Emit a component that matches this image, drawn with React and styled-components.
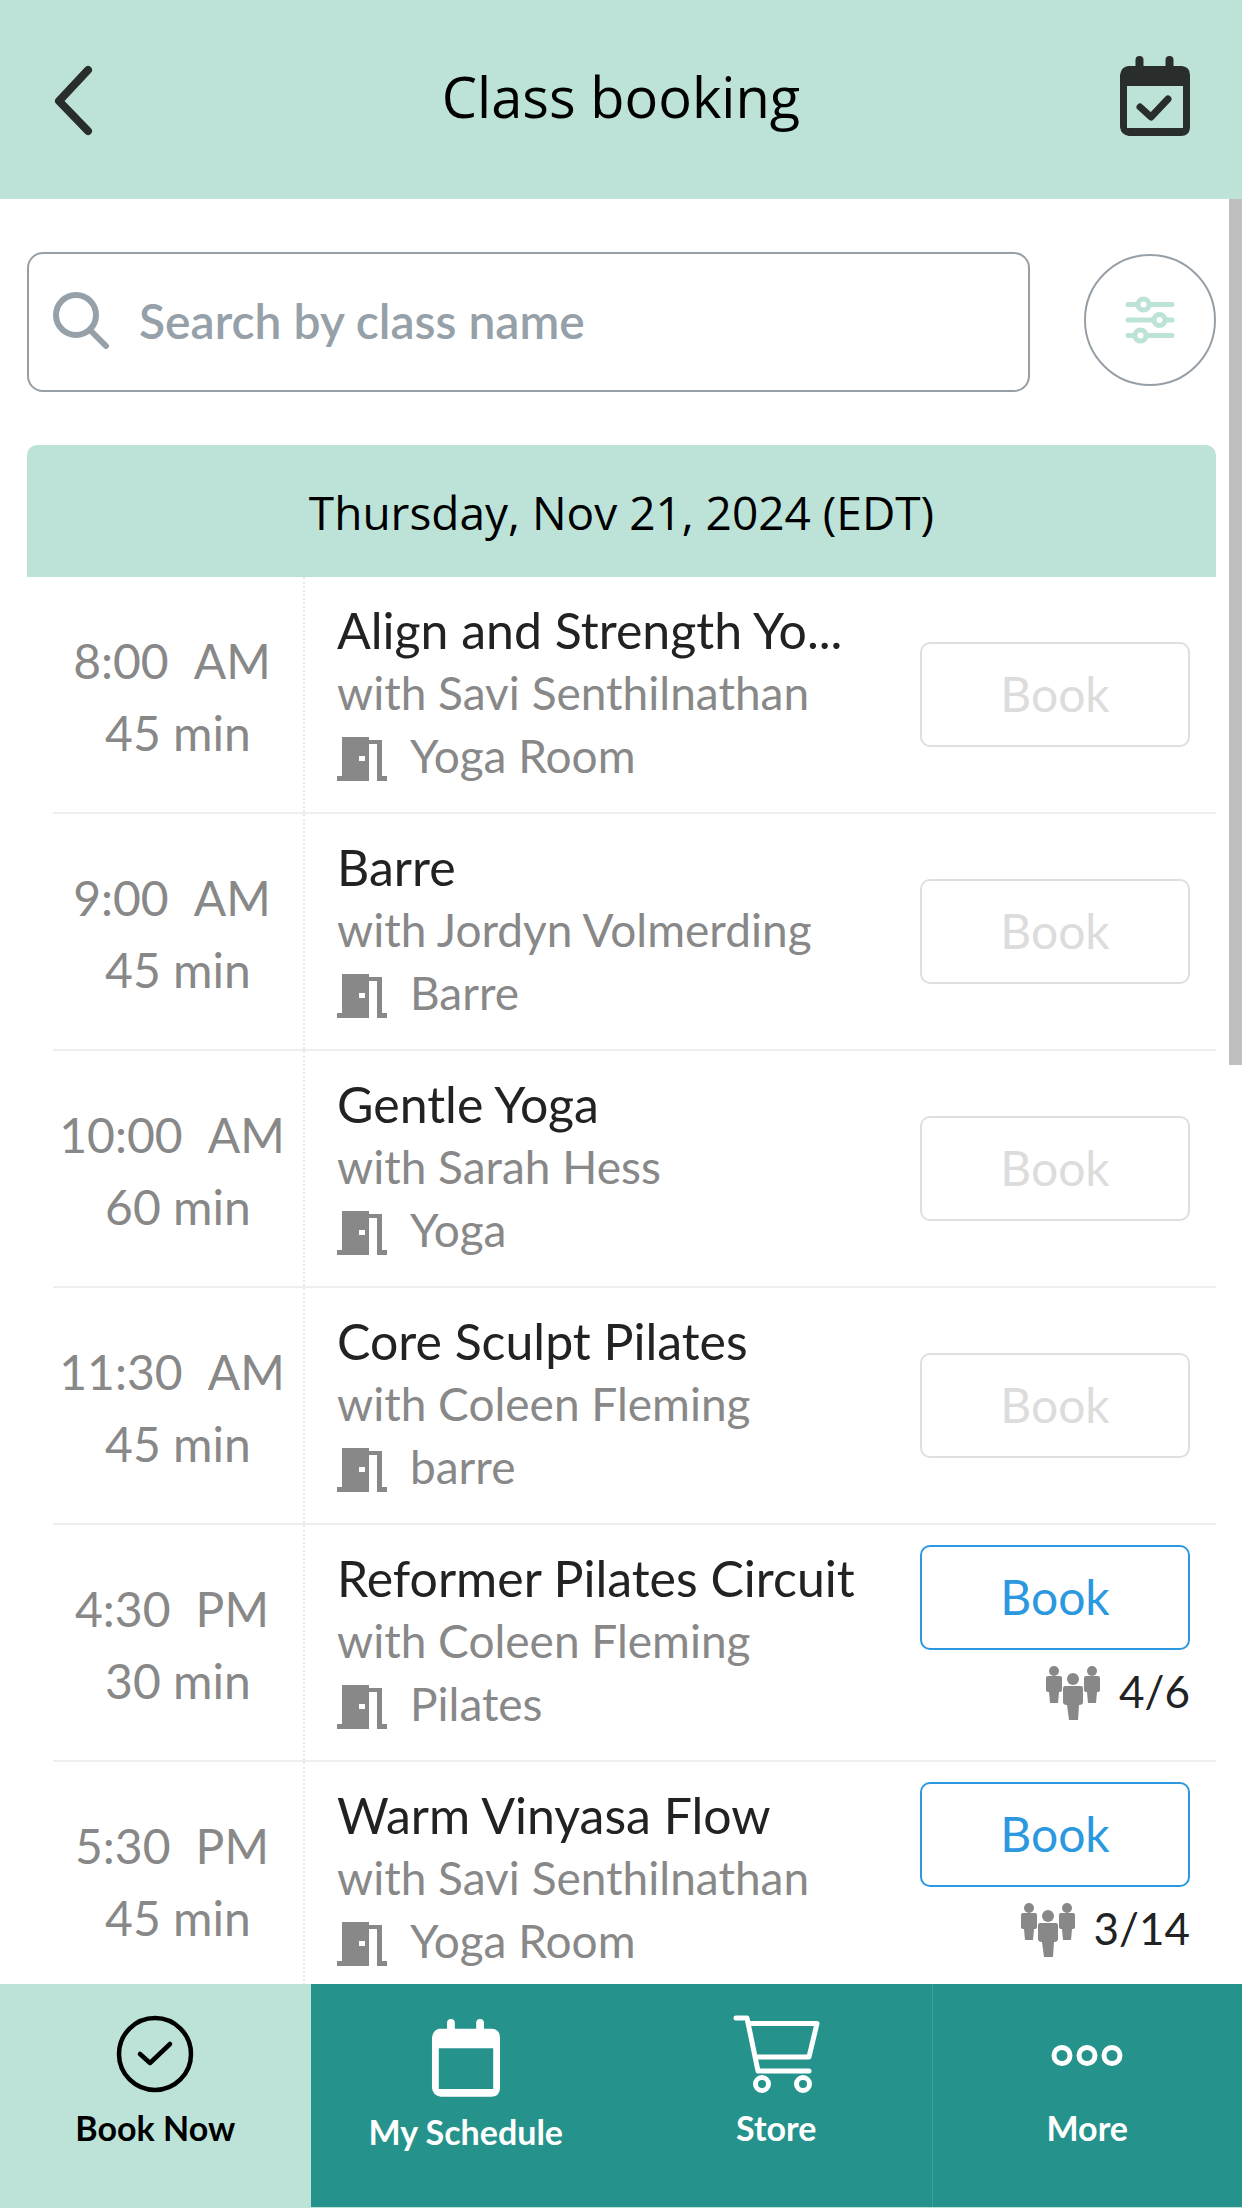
import styled, { createGlobalStyle } from "styled-components";

const GlobalStyle = createGlobalStyle`
  * {
    box-sizing: border-box;
  }

  body {
    margin: 0;
    background: #ffffff;
    color: #212224;
    font-family: Lato, "Open Sans", sans-serif;
  }

  button,
  input {
    font-family: inherit;
  }
`;

const Screen = styled.div`
  display: flex;
  flex-direction: column;
  height: 100vh;
`;

const Header = styled.header`
  display: flex;
  align-items: center;
  justify-content: space-between;
  flex: none;
  height: 199px;
  padding: 0 52px 8px 52px;
  background: #bde3d8;
`;

const HeaderButton = styled.button`
  display: flex;
  align-items: center;
  justify-content: ${(props) => (props.$end ? "flex-end" : "flex-start")};
  width: 80px;
  height: 96px;
  padding: 0;
  border: 0;
  background: none;
  color: #292d2c;
`;

const Title = styled.h1`
  margin: 0;
  color: #000000;
  font: 400 56px/80px "Open Sans", sans-serif;
`;

const Main = styled.main`
  position: relative;
  flex: 1;
  min-height: 0;
`;

const ScrollArea = styled.div`
  height: 100%;
  padding: 53px 26px 0 27px;
  overflow-y: auto;
  scrollbar-width: none;
`;

const ScrollThumb = styled.div`
  position: absolute;
  top: 0;
  right: 0;
  width: 13px;
  height: 866px;
  background: #bfbfbf;
`;

const SearchRow = styled.div`
  display: flex;
  align-items: flex-start;
  gap: 54px;
  margin-bottom: 53px;
`;

const SearchBox = styled.label`
  display: flex;
  align-items: center;
  flex: 1;
  gap: 28px;
  height: 140px;
  padding: 0 24px 4px;
  border: 2px solid #979fa6;
  border-radius: 16px;
  color: #95a0a8;
`;

const SearchInput = styled.input`
  flex: 1;
  min-width: 0;
  padding: 2px 0 0;
  border: 0;
  outline: 0;
  background: none;
  font-size: 48px;
  font-weight: 600;
  line-height: 62px;

  &::placeholder {
    color: #95a0a8;
    opacity: 1;
  }
`;

const FilterButton = styled.button`
  display: flex;
  align-items: center;
  justify-content: center;
  width: 132px;
  height: 132px;
  margin-top: 2px;
  padding: 0;
  border: 2px solid #979fa6;
  border-radius: 50%;
  background: #ffffff;
  color: #bde3d8;
`;

const DateBar = styled.h2`
  margin: 0;
  padding: 35px 0 33px;
  border-radius: 10px 10px 0 0;
  background: #bde3d8;
  color: #000000;
  font: 400 46px/64px "Open Sans", sans-serif;
  text-align: center;
`;

const ClassList = styled.ul`
  margin: 0;
  padding: 0 0 0 26px;
  list-style: none;
`;

const ClassRow = styled.li`
  display: grid;
  grid-template-columns: 252px 1fr 270px;
  padding-right: 26px;
  border-bottom: 2px solid #eceeef;
`;

const TimeColumn = styled.div`
  display: flex;
  flex-direction: column;
  justify-content: center;
  padding-top: 4px;
  border-right: 2px dotted #e6e8e9;
  color: #888888;
  font-size: 48px;
  line-height: 72px;
  text-align: center;
`;

const StartTime = styled.div`
  display: flex;
  justify-content: center;
  gap: 25px;
  padding-right: 12px;
`;

const Info = styled.div`
  min-width: 0;
  padding: 22px 0 25px 32px;
`;

const ClassName = styled.h3`
  margin: 0;
  overflow: hidden;
  font-size: 50px;
  font-weight: 400;
  line-height: 62px;
  white-space: nowrap;
`;

const Detail = styled.div`
  display: flex;
  align-items: center;
  gap: 23px;
  color: #888888;
  font-size: 46px;
  line-height: 63px;
  white-space: nowrap;

  svg {
    margin-top: 6px;
  }
`;

const Actions = styled.div`
  display: flex;
  flex-direction: column;
  justify-content: center;
`;

const BookButton = styled.button`
  height: 105px;
  padding: 0 0 2px;
  border: 2px solid #2b98e0;
  border-radius: 10px;
  background: #ffffff;
  color: #2b98e0;
  font-size: 48px;
  line-height: 62px;

  &:disabled {
    border-color: #dfdfdf;
    color: #dcdcdc;
  }
`;

const Spots = styled.div`
  display: flex;
  align-items: center;
  justify-content: flex-end;
  gap: 19px;
  margin-bottom: 8px;
  font-size: 44px;
  line-height: 82px;

  svg {
    margin-top: 4px;
  }
`;

const Nav = styled.nav`
  display: grid;
  grid-template-columns: repeat(4, 1fr);
  flex: none;
  height: 224px;
  border-bottom: 1px solid #bde3d8;
  background: #25938c;
`;

const NavLink = styled.a`
  display: flex;
  flex-direction: column;
  align-items: center;
  gap: 10px;
  padding-top: 30px;
  background: ${(props) => (props.$active ? "#bde3d8" : "#25938c")};
  color: ${(props) => (props.$active ? "#000000" : "#ffffff")};
  font-size: 34px;
  font-weight: 700;
  line-height: 48px;
  text-decoration: none;

  &:last-child {
    border-left: 1px solid #3c9f98;
  }
`;

const BackIcon = () => (
  <svg width="60" height="80" viewBox="0 0 60 80" fill="none">
    <path
      d="M36 14L7 45L36 75"
      stroke="currentColor"
      strokeWidth="8"
      strokeLinecap="round"
      strokeLinejoin="round"
    />
  </svg>
);

const CalendarIcon = ({ checked, height = 80, viewBox = "0 0 70 80" }) => (
  <svg width="70" height={height} viewBox={viewBox} fill="none">
    <path
      fill="currentColor"
      fillRule="evenodd"
      d="M8 10H62Q70 11 70 19V72Q69 80 61 80H9Q1 79 0 71V19Q1 11 8 10ZM7 30V72H63V30Z"
    />
    <path
      d="M19.500 4V14M49.500 4V14"
      stroke="currentColor"
      strokeWidth="8"
      strokeLinecap="round"
    />
    {checked && (
      <path
        d="M20 51L31 61L48 43"
        stroke="currentColor"
        strokeWidth="7"
        strokeLinecap="round"
        strokeLinejoin="round"
      />
    )}
  </svg>
);

const SearchIcon = () => (
  <svg width="58" height="58" viewBox="0 0 58 58" fill="none">
    <g stroke="currentColor" strokeWidth="6" strokeLinecap="round">
      <circle cx="23" cy="24" r="20" />
      <path d="M38 40L53 55" />
    </g>
  </svg>
);

const FilterIcon = () => (
  <svg width="50" height="48" viewBox="0 0 50 48" fill="none">
    <g stroke="currentColor" strokeWidth="5" strokeLinecap="round">
      <path d="M3 8.500H12M25 8.500H47M3 24H28M41 24H47M3 39.500H9M22 39.500H47" />
      <g strokeWidth="5">
        <circle cx="18.500" cy="8.500" r="5.500" />
        <circle cx="34.500" cy="24" r="5.500" />
        <circle cx="15.500" cy="39.500" r="5.500" />
      </g>
    </g>
  </svg>
);

const DoorIcon = () => (
  <svg width="50" height="44" viewBox="0 0 50 44" fill="currentColor">
    <path
      fillRule="evenodd"
      d="M5 0H32V44H0V39H5ZM22 19V24H28V19Z"
    />
    <path d="M32 3H45V39H50V44H40V7H32Z" />
  </svg>
);

const PeopleIcon = () => (
  <svg width="54" height="54" viewBox="0 0 54 54" fill="#888888">
    <circle cx="8" cy="5" r="5" />
    <path d="M0 12Q0 10 2 10H14Q16 10 16 12V24Q16 26 13 26L12 37H4L3 26Q0 26 0 24Z" />
    <circle cx="46" cy="5" r="5" />
    <path d="M38 12Q38 10 40 10H52Q54 10 54 12V24Q54 26 51 26L50 37H42L41 26Q38 26 38 24Z" />
    <circle cx="27" cy="13" r="6" />
    <path d="M17 22Q17 20 19 20H35Q37 20 37 22V36Q37 39 33 39L32 54H23L21 39Q17 39 17 36Z" />
  </svg>
);

const CheckCircleIcon = () => (
  <svg width="80" height="80" viewBox="0 0 80 80" fill="none">
    <g stroke="currentColor" strokeLinecap="round" strokeLinejoin="round">
      <circle cx="40" cy="40" r="36" strokeWidth="4.500" />
      <path d="M25 40L35 49L55 30" strokeWidth="4.500" />
    </g>
  </svg>
);

const CartIcon = () => (
  <svg width="88" height="80" viewBox="0 0 88 80" fill="none">
    <g
      stroke="currentColor"
      strokeWidth="5"
      strokeLinecap="round"
      strokeLinejoin="round"
    >
      <path d="M4 4H15L26 57H77M16 9.500H85L77 43H23" />
      <circle cx="30" cy="70" r="6.500" />
      <circle cx="71" cy="70" r="6.500" />
    </g>
  </svg>
);

const MoreIcon = () => (
  <svg width="72" height="80" viewBox="0 0 72 80" fill="none">
    <g stroke="currentColor" strokeWidth="5">
      <circle cx="11" cy="41.500" r="8" />
      <circle cx="36" cy="41.500" r="8" />
      <circle cx="61" cy="41.500" r="8" />
    </g>
  </svg>
);

const classes = [
  {
    time: "8:00",
    period: "AM",
    duration: "45 min",
    name: "Align and Strength Yo...",
    teacher: "Savi Senthilnathan",
    room: "Yoga Room",
  },
  {
    time: "9:00",
    period: "AM",
    duration: "45 min",
    name: "Barre",
    teacher: "Jordyn Volmerding",
    room: "Barre",
  },
  {
    time: "10:00",
    period: "AM",
    duration: "60 min",
    name: "Gentle Yoga",
    teacher: "Sarah Hess",
    room: "Yoga",
  },
  {
    time: "11:30",
    period: "AM",
    duration: "45 min",
    name: "Core Sculpt Pilates",
    teacher: "Coleen Fleming",
    room: "barre",
  },
  {
    time: "4:30",
    period: "PM",
    duration: "30 min",
    name: "Reformer Pilates Circuit",
    teacher: "Coleen Fleming",
    room: "Pilates",
    spots: "4/6",
  },
  {
    time: "5:30",
    period: "PM",
    duration: "45 min",
    name: "Warm Vinyasa Flow",
    teacher: "Savi Senthilnathan",
    room: "Yoga Room",
    spots: "3/14",
  },
];

const App = () => {
  return (
    <Screen>
      <GlobalStyle />
      <Header>
        <HeaderButton aria-label="Back">
          <BackIcon />
        </HeaderButton>
        <Title>Class booking</Title>
        <HeaderButton $end aria-label="My bookings">
          <CalendarIcon checked />
        </HeaderButton>
      </Header>
      <Main>
        <ScrollArea>
          <SearchRow>
            <SearchBox>
              <SearchIcon />
              <SearchInput
                type="text"
                aria-label="Search by class name"
                placeholder="Search by class name"
              />
            </SearchBox>
            <FilterButton aria-label="Filters">
              <FilterIcon />
            </FilterButton>
          </SearchRow>
          <DateBar>Thursday, Nov 21, 2024 (EDT)</DateBar>
          <ClassList>
            {classes.map((item) => (
              <ClassRow key={item.time}>
                <TimeColumn>
                  <StartTime>
                    <span>{item.time}</span>
                    <span>{item.period}</span>
                  </StartTime>
                  <div>{item.duration}</div>
                </TimeColumn>
                <Info>
                  <ClassName>{item.name}</ClassName>
                  <Detail>with {item.teacher}</Detail>
                  <Detail>
                    <DoorIcon />
                    {item.room}
                  </Detail>
                </Info>
                <Actions>
                  <BookButton disabled={!item.spots}>Book</BookButton>
                  {item.spots && (
                    <Spots>
                      <PeopleIcon />
                      {item.spots}
                    </Spots>
                  )}
                </Actions>
              </ClassRow>
            ))}
          </ClassList>
        </ScrollArea>
        <ScrollThumb />
      </Main>
      <Nav>
        <NavLink href="#book" $active>
          <CheckCircleIcon />
          Book Now
        </NavLink>
        <NavLink href="#schedule">
          <CalendarIcon height={84} viewBox="-1 -5 72 86" />
          My Schedule
        </NavLink>
        <NavLink href="#store">
          <CartIcon />
          Store
        </NavLink>
        <NavLink href="#more">
          <MoreIcon />
          More
        </NavLink>
      </Nav>
    </Screen>
  );
};

export default App;
